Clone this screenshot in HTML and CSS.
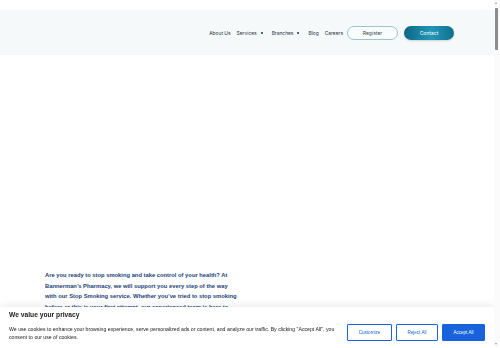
FILE: index.html
```html
<!DOCTYPE html>
<html lang="en">

<head>
    <meta charset="UTF-8">
    <meta name="viewport" content="width=device-width, initial-scale=1.0">
    <title>Stop Smoking Service</title>
    <link rel="stylesheet" href="styles.css">
</head>

<body>
    <div class="top-strip"></div>
    <header class="site-header">
        <nav class="main-nav">
            <a href="#">About Us</a>
            <a href="#" class="has-sub">Services <span class="caret"></span></a>
            <a href="#" class="has-sub">Branches <span class="caret"></span></a>
            <a href="#">Blog</a>
            <a href="#">Careers</a>
        </nav>
        <a href="#" class="btn-register">Register</a>
        <a href="#" class="btn-contact">Contact</a>
    </header>

    <section class="hero"></section>

    <section class="intro">
        <p>Are you ready to stop smoking and take control of your health? At Bannerman’s Pharmacy, we will support you every step of the way with our Stop Smoking service. Whether you’ve tried to stop smoking before or this is your first attempt, our experienced team is here to help you find the approach that works for you.</p>
    </section>

    <div class="filler"></div>

    <div class="cookie-bar">
        <div class="cookie-text">
            <h3>We value your privacy</h3>
            <p>We use cookies to enhance your browsing experience, serve personalized ads or content, and analyze our traffic. By clicking "Accept All", you consent to our use of cookies.</p>
        </div>
        <div class="cookie-actions">
            <button class="ck-btn ck-custom">Customize</button>
            <button class="ck-btn ck-reject">Reject All</button>
            <button class="ck-btn ck-accept">Accept All</button>
        </div>
    </div>

    <!-- page scrollbar (drawn, the headless shot hides the native one) -->
    <div class="scrollbar">
        <span class="sb-arrow sb-up"></span>
        <span class="sb-thumb"></span>
        <span class="sb-arrow sb-down"></span>
    </div>
</body>

</html>
```

FILE: styles.css
```css
html {
    overflow-y: scroll;
}

::-webkit-scrollbar {
    width: 0;
}

body {
    margin: 0;
    padding: 0 6px 0 0;
    background: #fff;
    font-family: "Open Sans", Arial, sans-serif;
    color: #1c2733;
}

.top-strip {
    height: 10px;
}

.site-header {
    height: 45px;
    background: #f6f9f9;
    display: flex;
    align-items: center;
    justify-content: flex-end;
    padding-right: 40px;
}

.main-nav {
    display: flex;
    align-items: center;
    gap: 6px;
    margin-right: 4px;
}

.main-nav a {
    color: #27323d;
    text-decoration: none;
    font-size: 4.9px;
    font-family: "Inter", sans-serif;
    display: flex;
    align-items: center;
}

.main-nav .caret {
    display: inline-block;
    width: 2px;
    height: 2px;
    border-radius: 50%;
    background: #27323d;
    margin-left: 4px;
    margin-right: 3px;
}

.btn-register,
.btn-contact {
    display: flex;
    align-items: center;
    justify-content: center;
    height: 14px;
    width: 51px;
    border-radius: 8px;
    font-size: 5px;
    font-family: "Inter", sans-serif;
    text-decoration: none;
    box-sizing: border-box;
}

.btn-register {
    border: 1px solid #9cc4cf;
    color: #3a4652;
    background: #fbfdfd;
}

.btn-contact {
    margin-left: 6px;
    width: 50px;
    color: #fff;
    background: linear-gradient(90deg, #0d6783 0%, #2396b8 55%, #0f6f8f 100%);
    box-shadow: 0 1px 2px rgba(0, 0, 0, 0.15);
}

.hero {
    height: 215px;
}

.intro {
    padding-left: 45px;
}

.intro p {
    margin: 0;
    width: 192px;
    font-family: "Liberation Sans", Arial, sans-serif;
    font-weight: bold;
    font-size: 5.8px;
    line-height: 10.6px;
    color: #223f78;
}

.filler {
    height: 2400px;
}

.cookie-bar {
    position: fixed;
    left: 0;
    right: 6px;
    bottom: 0;
    height: 41px;
    background: #fff;
    box-shadow: 0 -2px 8px rgba(0, 0, 0, 0.08);
    display: flex;
    align-items: flex-start;
    justify-content: space-between;
    padding: 4px 9px 0 9px;
    box-sizing: border-box;
    font-family: "Liberation Sans", Arial, sans-serif;
}

.cookie-text h3 {
    margin: 0;
    font-size: 6.7px;
    line-height: 8px;
    color: #212121;
}

.cookie-text p {
    margin: 6px 0 0;
    width: 330px;
    font-size: 5.2px;
    line-height: 8px;
    color: #212121;
}

.cookie-actions {
    display: flex;
    gap: 4px;
    margin-top: 13px;
}

.ck-btn {
    height: 17px;
    padding: 0;
    font-family: "Liberation Sans", Arial, sans-serif;
    font-size: 4.6px;
    border: 1px solid #1863dc;
    border-radius: 1px;
    background: #fff;
    color: #1863dc;
}

.ck-custom {
    width: 45px;
}

.ck-reject {
    width: 42px;
}

.ck-accept {
    width: 43px;
    background: #1863dc;
    color: #fff;
}

.scrollbar {
    position: fixed;
    top: 0;
    right: 0;
    bottom: 0;
    width: 6px;
    background: #fbfbfb;
}

.sb-thumb {
    position: absolute;
    left: 1px;
    top: 8px;
    width: 3px;
    height: 42px;
    background: #8c8c8c;
    border-radius: 1px;
}

.sb-arrow {
    position: absolute;
    left: 1px;
    width: 0;
    height: 0;
    border-left: 1.5px solid transparent;
    border-right: 1.5px solid transparent;
}

.sb-up {
    top: 2px;
    border-bottom: 2px solid #9a9a9a;
}

.sb-down {
    bottom: 3px;
    border-top: 2px solid #9a9a9a;
}
```
